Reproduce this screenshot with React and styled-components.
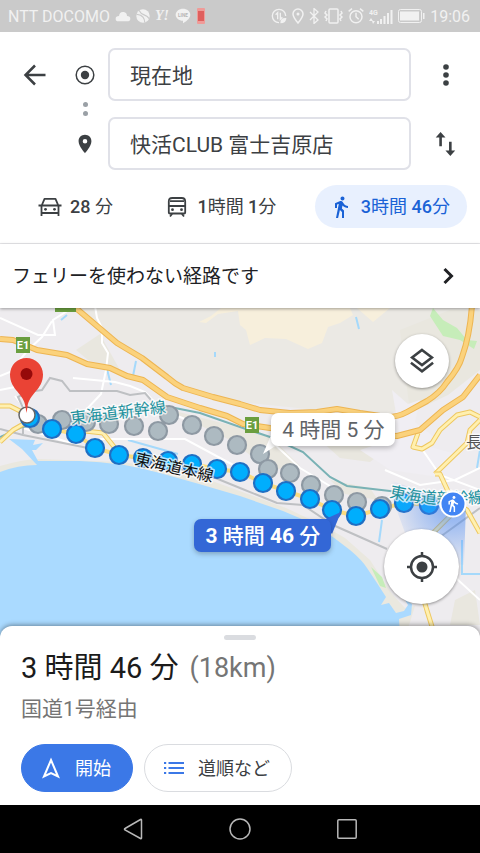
import React from "react";
import styled, { createGlobalStyle, css } from "styled-components";

const colors = {
  text: "#3c4043",
  dark: "#202124",
  muted: "#757575",
  blue: "#1a62d6",
  button: "#3b78e7",
  paleBlue: "#e8f0fe",
  border: "#e0e1e8",
  divider: "#e9e9ec",
  status: "#cacaca",
  statusText: "#f1f1f1",
  teal: "#1f929e"
};

const fonts = `Roboto, "Noto Sans CJK JP", sans-serif`;

const GlobalStyle = createGlobalStyle`
  * {
    box-sizing: border-box;
  }

  body {
    margin: 0;
    background: #fff;
    font-family: ${fonts};
    color: ${colors.text};
  }

  button,
  input {
    font: inherit;
    color: inherit;
  }
`;

const Screen = styled.div`
  display: flex;
  flex-direction: column;
  min-height: 100vh;
`;

const StatusBar = styled.header`
  display: flex;
  align-items: center;
  justify-content: space-between;
  height: 32px;
  padding: 0 10px 0 8px;
  background: ${colors.status};
  color: ${colors.statusText};
  font-size: 16px;
`;

const StatusGroup = styled.div`
  display: flex;
  align-items: center;
  gap: ${props => props.$gap}px;
`;

const Clock = styled.span`
  font-size: 16px;
`;

const Directions = styled.form`
  display: grid;
  grid-template-columns: 54px 30px 1fr 53px;
  grid-template-rows: 53px 16px 53px;
  column-gap: 8px;
  padding: 16px 8px 0;
  align-items: center;
  justify-items: center;
`;

const IconButton = styled.button`
  display: flex;
  align-items: center;
  justify-content: center;
  width: 48px;
  height: 48px;
  padding: 0;
  border: 0;
  background: none;
  cursor: pointer;
`;

const FieldLabel = styled.label`
  display: flex;
  grid-column: 2;
`;

const PlaceInput = styled.input`
  width: 100%;
  height: 53px;
  min-width: 0;
  padding: 0 20px 2px;
  border: 2px solid ${colors.border};
  border-radius: 7px;
  background: #fff;
  font-size: 21px;
  outline: none;
`;

const Dots = styled.div`
  grid-column: 2;
  display: flex;
  flex-direction: column;
  gap: 4px;

  &::before,
  &::after {
    content: "";
    width: 5px;
    height: 5px;
    border-radius: 50%;
    background: #9aa0a6;
  }
`;

const RowEnd = styled.div`
  grid-column: 4;
`;

const Modes = styled.nav`
  display: flex;
  justify-content: space-between;
  padding: 15px 13px 15px 24px;
  border-bottom: 1px solid ${colors.divider};
`;

const Mode = styled.button`
  display: flex;
  align-items: center;
  gap: 8px;
  height: 43px;
  padding: 0 14px;
  border: 0;
  border-radius: 22px;
  background: none;
  font-size: 18px;
  white-space: nowrap;
  cursor: pointer;

  ${props =>
    props.$selected &&
    css`
      padding-right: 17px;
      background: ${colors.paleBlue};
      color: ${colors.blue};
    `};
`;

const Digits = styled.span`
  font-weight: ${props => props.$weight};
`;

const LineText = styled.span`
  padding-bottom: 3px;
`;

const Notice = styled.a`
  position: relative;
  z-index: 2;
  display: flex;
  align-items: center;
  justify-content: space-between;
  height: 64px;
  padding: 0 20px 0 12px;
  background: #fff;
  box-shadow: 0 1px 3px rgba(0, 0, 0, 0.35);
  color: ${colors.dark};
  font-size: 19px;
  text-decoration: none;
`;

const MapArea = styled.main`
  position: relative;
  flex: 1 0 330px;
  margin-bottom: -12px;
  overflow: hidden;
  background: #eeecef;
`;

const MapDrawing = styled.svg`
  position: absolute;
  inset: 0;
  width: 100%;
  height: 100%;
`;

const RouteCallout = styled.button`
  position: absolute;
  top: ${props => props.$top}px;
  left: ${props => props.$left}%;
  height: 33px;
  padding: 0 11px;
  border: 0;
  border-radius: 7px;
  background: #fff;
  color: #5f6368;
  font-size: 21px;
  line-height: 30px;
  white-space: nowrap;
  box-shadow: 0 2px 5px rgba(0, 0, 0, 0.25);

  ${props =>
    props.$active &&
    css`
      background: #3367d6;
      color: #fff;
      font-weight: 500;
    `};
`;

const MapControls = styled.div`
  position: absolute;
  top: 26px;
  right: 21px;
  bottom: 34px;
  display: flex;
  flex-direction: column;
  align-items: center;
  justify-content: space-between;
`;

const RoundButton = styled(IconButton)`
  width: ${props => props.$size}px;
  height: ${props => props.$size}px;
  border-radius: 50%;
  background: #fff;
  box-shadow: 0 1px 3px rgba(0, 0, 0, 0.4);
`;

const Sheet = styled.section`
  position: relative;
  z-index: 2;
  display: flex;
  flex-direction: column;
  padding: 9px 21px 13px;
  border-radius: 12px 12px 0 0;
  background: #fff;
  box-shadow: 0 -1px 5px rgba(0, 0, 0, 0.4);
`;

const Handle = styled.div`
  align-self: center;
  width: 32px;
  height: 5px;
  border-radius: 3px;
  background: #dadce0;
`;

const Summary = styled.h1`
  display: flex;
  align-items: center;
  gap: 11px;
  margin: 8px 0 7px;
  color: #1b1b1b;
  font-size: 29px;
  font-weight: 400;
  line-height: 40px;
`;

const Distance = styled.span`
  color: ${colors.muted};
  font-size: 27px;
`;

const Via = styled.p`
  margin: 0 0 21px;
  color: ${colors.muted};
  font-size: 21px;
  line-height: 28px;
`;

const Actions = styled.div`
  display: flex;
  gap: 11px;
`;

const Action = styled.button`
  display: flex;
  align-items: center;
  gap: 12px;
  height: 48px;
  padding: 0 21px 0 17px;
  border: 1px solid ${props => (props.$primary ? colors.button : "#dadce0")};
  border-radius: 24px;
  background: ${props => (props.$primary ? colors.button : "#fff")};
  color: ${props => (props.$primary ? "#fff" : colors.text)};
  font-size: 18px;
  white-space: nowrap;
  cursor: pointer;
`;

const SystemBar = styled.footer`
  display: flex;
  align-items: center;
  justify-content: center;
  gap: 59px;
  height: 48px;
  background: #000;
`;

const Duration = ({ value, weight }) => (
  <LineText>
    {value.split(/(\d+)/).map((part, i) =>
      i % 2 ? (
        <Digits key={i} $weight={weight}>
          {part}
        </Digits>
      ) : (
        part
      )
    )}
  </LineText>
);

const Icon = ({ size = 24, width, children, box = "0 0 24 24" }) => (
  <svg
    width={width || size}
    height={size}
    viewBox={box}
    fill="currentColor"
    aria-hidden="true"
  >
    {children}
  </svg>
);

const WalkShape = () => (
  <path d="M13.5 5.5c1.1 0 2-.9 2-2s-.9-2-2-2-2 .9-2 2 .9 2 2 2zM9.8 8.9L7 23h2.1l1.8-8 2.1 2v6h2v-7.5l-2.1-2 .6-3C14.8 12 16.8 13 19 13v-2c-1.9 0-3.5-1-4.3-2.4l-1-1.6c-.4-.6-1-1-1.7-1-.3 0-.5.1-.8.1L6 8.3V13h2V9.6l1.8-.7" />
);

const CarIcon = () => (
  <Icon>
    <path
      d="M3.500 10.500V21M20.500 10.500V21M3.500 18h17M3 10.500h18M.5 10.500H3M21 10.500h2.500M3.500 11l3-7.200h11l3 7.200"
      fill="none"
      stroke="currentColor"
      strokeWidth="1.800"
      strokeLinejoin="round"
    />
    <circle cx="7.500" cy="14.300" r="1.400" />
    <circle cx="16.500" cy="14.300" r="1.400" />
  </Icon>
);

const BusIcon = () => (
  <Icon>
    <path
      d="M3.800 17.500V6.500q0-3.500 3.500-3.500h9.400q3.500 0 3.500 3.500v11q0 1-1 1H4.800q-1 0-1-1zM3.800 11h16.400M5 6.200h14M7.500 18.500l-2.500 3M16.500 18.500l2.500 3"
      fill="none"
      stroke="currentColor"
      strokeWidth="1.800"
    />
    <circle cx="7.500" cy="14.700" r="1.400" />
    <circle cx="16.500" cy="14.700" r="1.400" />
  </Icon>
);

const NotificationIcons = () => (
  <>
    <Icon size={16}>
      <path d="M5 20Q1 20 1 16T6 12Q7 5 13 6q5 1 5 6 5 0 5 4t-5 4z" />
    </Icon>
    <Icon size={14}>
      <circle cx="12" cy="12" r="11.500" />
      <path
        d="M5 2q3 6 9 8t9 7M1 9q8 1 11 5t3 9"
        fill="none"
        stroke={colors.status}
        strokeWidth="2"
      />
    </Icon>
    <Icon width={15} size={14} box="0 0 15 14">
      <text
        x="0"
        y="11"
        fontFamily="Liberation Serif, serif"
        fontStyle="italic"
        fontWeight="700"
        fontSize="14"
      >
        Y!
      </text>
    </Icon>
    <Icon size={16}>
      <path d="M12 1c6 0 11 4 11 9 0 6-8 11-11 13v-4C6 19 1 15 1 10S6 1 12 1z" />
      <text
        x="12"
        y="13"
        fill="#b5b5b5"
        fontFamily="Roboto, sans-serif"
        fontWeight="700"
        fontSize="7"
        textAnchor="middle"
      >
        LINE
      </text>
    </Icon>
    <Icon width={10} size={16} box="0 0 10 16">
      <rect x="1" width="8" height="16" rx="1" fill="#ef9b98" />
      <rect x="2" y="3" width="6" height="10" fill="#df5f5d" />
    </Icon>
  </>
);

const SystemIcons = () => (
  <>
    <Icon size={16}>
      <g fill="none" stroke="currentColor" strokeWidth="2">
        <path d="M22 12A10 10 0 1 0 12 22" />
        <path d="M7 10l3-3v10M14 7v10l3-3" />
      </g>
      <path d="M14 23q0-9 9-8 0 8-9 8z" />
    </Icon>
    <Icon width={12} size={16} box="0 0 12 16">
      <path
        d="M6 15Q1 9 1 6a5 5 0 0 1 10 0q0 3-5 9z"
        fill="none"
        stroke="currentColor"
        strokeWidth="1.500"
      />
      <circle cx="6" cy="6" r="1.500" />
    </Icon>
    <Icon width={10} size={16} box="0 0 10 16">
      <path
        d="M1 4l8 8-4 3.500V.5L9 4l-8 8"
        fill="none"
        stroke="currentColor"
        strokeWidth="1.300"
      />
    </Icon>
    <Icon width={19} size={16} box="0 0 19 16">
      <g fill="none" stroke="currentColor" strokeWidth="1.500">
        <rect x="5" y="1" width="9" height="14" rx="1" />
        <path d="M2 3L1 5l2 2-2 2 2 2-1 2M17 3l1 2-2 2 2 2-2 2 1 2" />
      </g>
    </Icon>
    <Icon size={16}>
      <g fill="none" stroke="currentColor" strokeWidth="2.200">
        <circle cx="12" cy="13" r="9" />
        <path d="M12 7v6l4 4M1 5l5-4M23 5l-5-4" />
      </g>
    </Icon>
    <Icon width={24} size={17} box="0 0 24 17">
      <text
        x="0"
        y="7"
        fontFamily="Roboto, sans-serif"
        fontWeight="700"
        fontSize="7"
      >
        4G
      </text>
      <path d="M2 10l-2 3h4zM4 16l2-3H3zM8 13h2v3H8zM11 11h2v5h-2zM14.500 8h2v8h-2zM18 5h2v11h-2zM21.500 2h2v14h-2z" />
    </Icon>
    <Icon width={27} size={14} box="0 0 27 14">
      <rect
        x=".5"
        y=".5"
        width="23"
        height="13"
        rx="2"
        fill="none"
        stroke="currentColor"
      />
      <path d="M2 2.500h19v9H2zM25 4h1.500v6H25z" />
    </Icon>
  </>
);

const alternateStops = [
  [38, 424], [62, 420], [86, 422], [109, 424], [134, 426], [158, 431],
  [169, 415], [192, 425], [214, 436], [237, 445], [260, 454], [268, 469],
  [290, 473], [311, 485], [334, 495], [357, 502], [382, 506]
];

const routeStops = [
  [30, 418], [52, 429], [76, 434], [95, 448], [119, 455], [143, 458],
  [168, 461], [192, 464], [217, 469], [240, 472], [263, 483], [286, 491],
  [310, 499], [332, 510], [356, 516], [380, 509], [404, 503], [429, 505]
];

const highways = [
  "M60 297L77 309L117 343L142 358L167 377Q175 384 183 388L213 397L240 404L260 410L290 413L317 412L337 409L360 413L387 417Q398 417 407 412L427 401Q440 393 447 382Q459 368 462 357Q470 335 472 305",
  "M0 339L13 340L37 350L67 355L87 364L110 368L127 376L143 380L167 397L200 408L227 416L243 424L270 428L397 436L420 430L443 410L463 397L480 375"
];

const localRoads = [
  "M0 406H10L20 411L30 417",
  "M0 442L13 430L27 422",
  "M85 431L103 433L115 448L125 456",
  "M418 433L413 447L422 449L432 443L440 430L457 415L470 412L480 417",
  "M435 474L467 443L470 430L480 420",
  "M435 474H440L453 502L467 510L480 533",
  "M453 513L430 536",
  "M420 588L434 633"
];

const minorRoads =
  "M0 318L38 335H55L53 320L75 306M52 321L42 337L28 350L10 372L0 376M95 306L97 318L102 328V343L108 353L106 370L101 394L85 411M73 378L115 382L130 386L145 392L162 410L200 425M0 390L20 386M15 396L27 411M23 428L80 446M100 439H185L250 474M422 449L440 475L480 490M270 440L300 468L340 492M385 470L420 485L455 480L480 468M438 530L458 580L480 600M390 560L415 578L425 610";

const Stop = ({ x, y, fill, stroke }) => (
  <circle cx={x} cy={y} r="9" fill={fill} stroke={stroke} strokeWidth="2.200" />
);

const Shield = ({ x, y, width = 14, children }) => (
  <g>
    <rect x={x} y={y} width={width} height="16" fill="#6a9e3f" />
    <text
      x={x + width / 2}
      y={y + 12}
      fill="#fff"
      fontSize="11"
      fontWeight="700"
      textAnchor="middle"
    >
      {children}
    </text>
  </g>
);

const RouteMap = () => (
  <MapDrawing
    viewBox="0 308 480 330"
    preserveAspectRatio="xMidYMid slice"
    role="img"
    aria-label="地図"
    fontFamily={fonts}
  >
    <defs>
      <radialGradient
        id="heading"
        gradientUnits="userSpaceOnUse"
        cx="453"
        cy="504"
        r="66"
      >
        <stop offset="0" stopColor="#4285f4" stopOpacity="0.65" />
        <stop offset="1" stopColor="#4285f4" stopOpacity="0" />
      </radialGradient>
      <path id="railName" d="M389 497Q436 508 490 502" />
    </defs>

    <path
      d="M78 308L117 342L183 387L240 402L317 410L387 415L427 399L460 357L472 308z"
      fill="#ebe9e4"
    />
    <path
      d="M76 350L100 334L111 354L120 370L88 360zM163 408L230 425L270 436L300 466L270 470L230 440L185 418zM320 440L355 438L385 450L370 462L340 458zM400 330L450 310H480V370L448 395L410 413zM455 600L475 590L480 625H450zM330 480L370 488L378 500L345 494z"
      fill="#e9e7df"
    />
    <path
      d="M199 322L211 316L221 308H350L353 315L340 323L328 327L322 343L308 349L286 339L265 338L250 345L246 330L240 325L238 311L218 314L206 323zM357 308H390L373 322z"
      fill="#f7efdc"
    />
    <path
      d="M433 308L443 320L457 328L467 340L477 341L474 349L460 340L443 336L430 316z"
      fill="#c6edb9"
    />
    <path
      d="M392 390L408 404L420 400L415 422L438 440L430 447L460 455V480L390 470L360 450L400 437z"
      fill="#f0eef3"
    />

    <path
      d="M0 466Q20 460 38 459L120 462Q165 466 215 482L286 508Q325 526 345 538L370 560L392 594L405 608L415 606L405 638H0z"
      fill="#eae8df"
    />
    <path
      d="M0 472Q18 465 37 465L22 449L9 439L35 440L33 445L43 443L36 450H32L38 461L80 461Q120 462 160 473T240 496L283 511Q320 525 350 550Q362 560 367 568L377 583L386 597L381 605L389 603L396 613L404 611L408 605L405 600L412 604L411 615L399 619L400 638H0z"
      fill="#aadaff"
    />
    <path d="M371 567L382 577L386 588L380 586z" fill="#c6edb9" />
    <path
      d="M106 365l5 20M136 361l-3 15M61 320l6-5M215 352v5M356 317l3 12M128 440l50 14M382 520l-3 22M462 540v34h18M480 450l-3 18"
      fill="none"
      stroke="#a5d9fb"
      strokeWidth="2"
    />

    <path d={minorRoads} fill="none" stroke="#fff" strokeWidth="2" />
    <path
      d="M25 412L18 397L28 392L42 390L50 378L62 381L70 391L117 391L130 395L145 393L151 400M0 429L23 435L113 453L213 477L240 488L277 503L303 505L333 525L387 549M440 537L480 508M23 420V434"
      fill="none"
      stroke="#bec0c3"
      strokeWidth="2"
    />
    <path
      d="M0 437L22 427L80 421L165 406L200 413L240 427L270 437L303 452L330 477L347 486L390 491L450 500L480 497"
      fill="none"
      stroke="#79b2b5"
      strokeWidth="2"
    />

    {localRoads.map(d => (
      <g key={d} fill="none" strokeLinejoin="round">
        <path d={d} stroke="#eec75f" strokeWidth="5" />
        <path d={d} stroke="#fff0b0" strokeWidth="3" />
      </g>
    ))}
    {highways.map(d => (
      <g key={d} fill="none" strokeLinejoin="round">
        <path d={d} stroke="#edb552" strokeWidth="6" />
        <path d={d} stroke="#fbd27c" strokeWidth="4" />
      </g>
    ))}
    <polyline
      points={routeStops.join(" ")}
      fill="none"
      stroke="#fbdc80"
      strokeWidth="4"
    />

    <Shield x={55} y={296} width={21}>
      E1A
    </Shield>
    <Shield x={16} y={337}>
      E1
    </Shield>
    <Shield x={245} y={417}>
      E1
    </Shield>

    {alternateStops.map(([x, y]) => (
      <Stop key={x} x={x} y={y} fill="#adbac1" stroke="#8e99a3" />
    ))}
    {routeStops.map(([x, y]) => (
      <Stop key={x} x={x} y={y} fill="#00aefd" stroke="#1f6fc3" />
    ))}

    <path d="M453 504L385 478L415 560L464 565L466 504z" fill="url(#heading)" />

    <g
      fontSize="16"
      strokeWidth="3"
      strokeLinejoin="round"
      paintOrder="stroke"
      stroke="#fff"
      strokeOpacity="0.7"
    >
      <text x="71" y="424" fill={colors.teal} transform="rotate(-7 71 424)">
        東海道新幹線
      </text>
      <text x="134" y="464" fill="#111" transform="rotate(13 134 464)">
        東海道本線
      </text>
      <text fill={colors.teal}>
        <textPath href="#railName">東海道新幹線</textPath>
      </text>
      <text x="466" y="448" fill="#555">
        長
      </text>
    </g>

    <path d="M263 454L271 435H286V445H277z" fill="#fff" />
    <path d="M321 521L341 512L332 534z" fill="#3367d6" />

    <circle
      cx="27"
      cy="415"
      r="8"
      fill="#fff"
      stroke="#666"
      strokeWidth="1.500"
    />
    <path
      d="M26.500 413L25.500 407C24 393 10 390 10 374.500a16.500 16.500 0 0 1 33 0C43 390 29 393 27.500 407z"
      fill="#ea4335"
    />
    <circle cx="26.500" cy="374" r="6" fill="#960a0a" />

    <circle
      cx="453"
      cy="504"
      r="12.500"
      fill="#4285f4"
      stroke="#fff"
      strokeWidth="2"
    />
    <g transform="translate(444 495) scale(.74)" fill="#fff">
      <WalkShape />
    </g>
  </MapDrawing>
);

const App = () => (
  <>
    <GlobalStyle />
    <Screen>
      <StatusBar>
        <StatusGroup $gap={5}>
          <span>NTT DOCOMO</span>
          <NotificationIcons />
        </StatusGroup>
        <StatusGroup $gap={5}>
          <SystemIcons />
          <Clock>19:06</Clock>
        </StatusGroup>
      </StatusBar>

      <Directions>
        <IconButton type="button" aria-label="戻る">
          <Icon>
            <path
              d="M22.500 12H3M12 2.500L2.500 12l9.500 9.500"
              fill="none"
              stroke="currentColor"
              strokeWidth="2.500"
            />
          </Icon>
        </IconButton>
        <FieldLabel htmlFor="origin" aria-label="出発地">
          <Icon size={20} box="0 0 20 20">
            <circle
              cx="10"
              cy="10"
              r="8.800"
              fill="none"
              stroke="currentColor"
              strokeWidth="1.500"
            />
            <circle cx="10" cy="10" r="4.200" />
          </Icon>
        </FieldLabel>
        <PlaceInput id="origin" defaultValue="現在地" />
        <IconButton type="button" aria-label="その他">
          <Icon>
            <circle cx="12" cy="4" r="2.800" />
            <circle cx="12" cy="12" r="2.800" />
            <circle cx="12" cy="20" r="2.800" />
          </Icon>
        </IconButton>
        <Dots />
        <FieldLabel htmlFor="destination" aria-label="目的地">
          <Icon size={22}>
            <path d="M12 2C8 2 5 5 5 9c0 5.300 7 13 7 13s7-7.700 7-13c0-4-3-7-7-7zm0 9.500a2.500 2.500 0 1 1 0-5 2.500 2.500 0 0 1 0 5z" />
          </Icon>
        </FieldLabel>
        <PlaceInput id="destination" defaultValue="快活CLUB 富士吉原店" />
        <RowEnd>
          <IconButton type="button" aria-label="入れ替え">
            <Icon size={26}>
              <path d="M7 1L2.500 6h3.300v8h2.400V6h3.300zM14.800 10v8h-3.300l4.500 5 4.500-5h-3.300v-8z" />
            </Icon>
          </IconButton>
        </RowEnd>
      </Directions>

      <Modes>
        <Mode>
          <CarIcon />
          <Duration value="28 分" weight={500} />
        </Mode>
        <Mode>
          <BusIcon />
          <Duration value="1時間 1分" weight={500} />
        </Mode>
        <Mode $selected>
          <Icon>
            <WalkShape />
          </Icon>
          <Duration value="3時間 46分" weight={500} />
        </Mode>
      </Modes>

      <Notice href="#options">
        <LineText>フェリーを使わない経路です</LineText>
        <Icon>
          <path
            d="M8.500 5l7 7-7 7"
            fill="none"
            stroke="currentColor"
            strokeWidth="3"
          />
        </Icon>
      </Notice>

      <MapArea>
        <RouteMap />
        <RouteCallout $top={105} $left={56.5}>
          4 時間 5 分
        </RouteCallout>
        <RouteCallout $active $top={211} $left={40.5}>
          <Duration value="3 時間 46 分" weight={700} />
        </RouteCallout>
        <MapControls>
          <RoundButton $size={54} aria-label="レイヤ">
            <Icon size={28}>
              <path
                d="M12 2.500l8.500 6.500L12 15.500 3.500 9zM2.500 13.500L12 20.800l9.500-7.300"
                fill="none"
                stroke="currentColor"
                strokeWidth="2.200"
              />
            </Icon>
          </RoundButton>
          <RoundButton $size={75} aria-label="現在地を表示">
            <Icon size={30} box="0 0 30 30">
              <g fill="none" stroke="currentColor" strokeWidth="2.500">
                <circle cx="15" cy="15" r="11" />
                <path d="M15 0v5M15 25v5M0 15h5M25 15h5" />
              </g>
              <circle cx="15" cy="15" r="5.500" />
            </Icon>
          </RoundButton>
        </MapControls>
      </MapArea>

      <Sheet>
        <Handle />
        <Summary>
          3 時間 46 分 <Distance>(18km)</Distance>
        </Summary>
        <Via>国道1号経由</Via>
        <Actions>
          <Action $primary>
            <Icon>
              <path
                d="M12 4l7 16.500-7-3.500-7 3.500z"
                fill="none"
                stroke="currentColor"
                strokeWidth="2"
              />
            </Icon>
            <LineText>開始</LineText>
          </Action>
          <Action>
            <Icon>
              <path
                d="M6.500 7H22M6.500 12H22M6.500 17H22M2 7h2.200M2 12h2.200M2 17h2.200"
                stroke={colors.button}
                strokeWidth="2"
              />
            </Icon>
            <LineText>道順など</LineText>
          </Action>
        </Actions>
      </Sheet>

      <SystemBar>
        <IconButton aria-label="戻る">
          <Icon>
            <path
              d="M20.500 3v18q0 1-1 .5L4 13q-1-1 0-1.500L19.500 2.500q1-.5 1 .5z"
              fill="none"
              stroke="#b8b8b8"
              strokeWidth="1.500"
            />
          </Icon>
        </IconButton>
        <IconButton aria-label="ホーム">
          <Icon>
            <circle
              cx="12"
              cy="12"
              r="10"
              fill="none"
              stroke="#b8b8b8"
              strokeWidth="1.500"
            />
          </Icon>
        </IconButton>
        <IconButton aria-label="履歴">
          <Icon>
            <rect
              x="2.800"
              y="2.800"
              width="18.400"
              height="18.400"
              rx="1"
              fill="none"
              stroke="#b8b8b8"
              strokeWidth="1.500"
            />
          </Icon>
        </IconButton>
      </SystemBar>
    </Screen>
  </>
);

export default App;
